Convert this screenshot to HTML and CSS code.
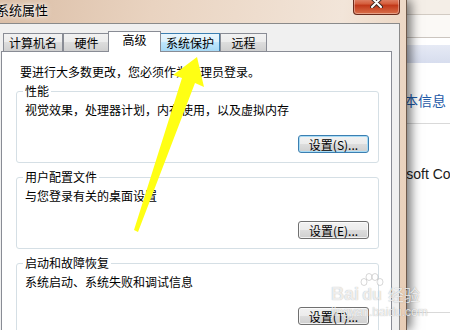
FILE: index.html
```html
<!DOCTYPE html>
<html lang="zh-CN">
<head>
    <meta charset="UTF-8">
    <meta name="viewport" content="width=device-width, initial-scale=1.0">
    <title>系统属性</title>
    <link rel="stylesheet" href="styles.css">
</head>
<body>
    <div class="window">
        <div class="titlebar">
            <span class="title">系统属性</span>
            <button class="close-btn" type="button">
                <svg width="13" height="10" viewBox="0 0 13 10">
                    <path d="M2 0 L11 9 M11 0 L2 9" stroke="#3d2a24" stroke-width="4" stroke-linecap="round"/>
                    <path d="M2 0 L11 9 M11 0 L2 9" stroke="#fff" stroke-width="2" stroke-linecap="round"/>
                </svg>
            </button>
        </div>

        <div class="client">
            <div class="tabs">
                <span class="tab">计算机名</span>
                <span class="tab">硬件</span>
                <span class="tab tab-active">高级</span>
                <span class="tab tab-hover">系统保护</span>
                <span class="tab">远程</span>
            </div>

            <div class="tab-panel">
                <p class="notice">要进行大多数更改，您必须作为管理员登录。</p>

                <fieldset class="group">
                    <legend>性能</legend>
                    <p class="group-desc">视觉效果，处理器计划，内存使用，以及虚拟内存</p>
                    <div class="group-actions">
                        <button class="btn btn-default" type="button">设置(S)...</button>
                    </div>
                </fieldset>

                <fieldset class="group">
                    <legend>用户配置文件</legend>
                    <p class="group-desc">与您登录有关的桌面设置</p>
                    <div class="group-actions">
                        <button class="btn" type="button">设置(E)...</button>
                    </div>
                </fieldset>

                <fieldset class="group">
                    <legend>启动和故障恢复</legend>
                    <p class="group-desc">系统启动、系统失败和调试信息</p>
                    <div class="group-actions">
                        <button class="btn" type="button">设置(T)...</button>
                    </div>
                </fieldset>
            </div>
        </div>
    </div>

    <!-- window behind the dialog -->
    <div class="behind">
        <div class="behind-top"></div>
        <div class="behind-address"></div>
        <div class="behind-band"></div>
        <h2 class="behind-heading">基本信息</h2>
        <hr class="behind-rule">
        <p class="behind-text">Microsoft Corporation</p>
        <hr class="behind-rule behind-rule-low">
    </div>

    <!-- yellow pointer drawn over the screenshot -->
    <svg class="arrow" width="450" height="330" viewBox="0 0 450 330">
        <polygon points="197,57 204,87 195,83 138,232 134,230 182,78 173,75" fill="#ffff14"/>
    </svg>

    <div class="watermark">
        <div class="wm-logo">
            <span class="wm-bai">Bai</span>
            <span class="wm-paw">
                <svg width="24" height="14" viewBox="0 0 24 14">
                    <ellipse cx="4" cy="9" rx="3" ry="3.5"/>
                    <ellipse cx="9" cy="4" rx="3" ry="3.5"/>
                    <ellipse cx="15" cy="4" rx="3" ry="3.5"/>
                    <ellipse cx="20" cy="9" rx="3" ry="3.5"/>
                </svg>
                <span class="wm-du">du</span>
            </span>
            <span class="wm-cn">经验</span>
        </div>
        <div class="wm-url">jingyan.baidu.com</div>
    </div>
</body>
</html>
```

FILE: styles.css
```css
body {
    margin: 0;
    width: 450px;
    height: 330px;
    overflow: hidden;
    display: flex;
    background: #fff;
    font-family: "Noto Sans CJK SC", sans-serif;
    font-size: 12px;
    color: #000;
}

/* dialog frame */
.window {
    box-sizing: border-box;
    flex: none;
    width: 421px;
    margin-left: -14px;
    padding: 0 6px;
    border-right: 1px solid #6e5a4c;
    background: linear-gradient(100deg, #d9bca4 0%, #e9d3c0 35%, #f2e5d9 75%, #e8cdb5 100%);
    position: relative;
    z-index: 1;
    box-shadow: 4px 0 10px rgba(0, 0, 0, 0.55);
}
.titlebar {
    display: flex;
    align-items: flex-start;
    height: 23px;
}
.title {
    margin-left: 4px;
    line-height: 20px;
    font-size: 13px;
    text-shadow: 0 0 6px #fff, 0 0 3px #fff;
}
.close-btn {
    margin: -5px 0 0 auto;
    width: 47px;
    height: 20px;
    padding: 0 0 3px;
    display: flex;
    align-items: center;
    justify-content: center;
    border: 1px solid #6b2b1c;
    border-top: none;
    border-radius: 0 0 4px 4px;
    background: linear-gradient(#e9a793, #d5603f 45%, #c2391a 55%, #d9704b);
    box-shadow: inset 0 0 0 1px rgba(255, 255, 255, 0.35);
}

.client {
    border: 1px solid #8a8a8a;
    background: #f0f0f0;
    padding-top: 7px;
}

/* tabs */
.tabs {
    display: flex;
    align-items: flex-end;
    margin: 0 7px -1px 8px;
    padding-left: 2px;
}
.tab {
    box-sizing: border-box;
    height: 18px;
    min-width: 47px;
    margin-bottom: 1px;
    padding: 0 5px;
    border: 1px solid #898c95;
    border-bottom: none;
    line-height: 17px;
    text-align: center;
    background: linear-gradient(#f2f2f2, #ebebeb 50%, #dddddd 50%, #cfcfcf);
}
.tab-active {
    height: 21px;
    min-width: 53px;
    margin: 0 -1px 0 -2px;
    line-height: 16px;
    background: #fff;
    position: relative;
    z-index: 1;
}
.tab-hover {
    border-color: #3c7fb1;
    background: linear-gradient(#eaf6fd, #d9f0fc 50%, #bee6fd 50%, #a7d9f5);
}

.tab-panel {
    margin: 0 7px 0 8px;
    padding: 12px 12px 20px 14px;
    border: 1px solid #898c95;
    background: #fff;
}
.notice {
    margin: 0 0 0 4px;
    line-height: 16px;
}

.group {
    margin: 3px 0 0;
    padding: 0 9px 9px 8px;
    border: 1px solid #d5dfe5;
    border-radius: 3px;
    min-width: 0;
}
.group + .group {
    margin-top: 6px;
}
.group legend {
    padding: 0 2px;
    margin-left: -2px;
    line-height: 16px;
}
.group-desc {
    margin: 3px 0 0;
    line-height: 16px;
}
.group-actions {
    display: flex;
    justify-content: flex-end;
    margin-top: 17px;
}

.btn {
    box-sizing: border-box;
    width: 71px;
    height: 18px;
    padding: 0;
    font-family: "Noto Sans CJK SC", sans-serif;
    font-size: 12px;
    line-height: 15px;
    color: #000;
    border: 1px solid #707070;
    border-radius: 3px;
    background: linear-gradient(#f2f2f2, #ebebeb 50%, #dddddd 50%, #cfcfcf);
    box-shadow: inset 0 0 0 1px rgba(255, 255, 255, 0.7);
}
.btn-default {
    border-color: #3c7fb1;
    box-shadow: inset 0 0 0 1px #a8dcf6;
}

/* background window */
.behind {
    flex: 1;
    min-width: 0;
    overflow: hidden;
    white-space: nowrap;
}
.behind-top {
    height: 14px;
    border-bottom: 1px solid #d2cbc3;
    background: #f4eee7;
}
.behind-address {
    height: 22px;
    border-bottom: 1px solid #cbc5bf;
    background: #fbf9f6;
}
.behind-band {
    height: 18px;
    margin-top: 7px;
    background: linear-gradient(#e6eaf5, #d7ddee);
}
.behind-heading {
    margin: 27px 0 0 -17px;
    font-size: 14px;
    font-weight: normal;
    line-height: 20px;
    color: #1e5aa8;
}
.behind-rule {
    margin: 13px 0 0;
    border: none;
    border-top: 1px solid #d9d9d9;
}
.behind-text {
    margin: 42px 0 0 -35px;
    font-family: "Liberation Sans", sans-serif;
    font-size: 14px;
    line-height: 16px;
    color: #1a1a1a;
}
.behind-rule-low {
    margin-top: 130px;
}

.arrow {
    position: absolute;
    top: 0;
    left: 0;
    pointer-events: none;
    z-index: 2;
}

/* baidu jingyan watermark */
.watermark {
    position: absolute;
    left: 331px;
    top: 273px;
    z-index: 3;
    color: rgba(255, 255, 255, 0.8);
    text-shadow: 0 0 1px rgba(0, 0, 0, 0.35);
}
.wm-logo {
    display: flex;
    align-items: flex-end;
    gap: 1px;
}
.wm-bai {
    font-family: "Liberation Sans", sans-serif;
    font-weight: bold;
    font-size: 18px;
    line-height: 18px;
}
.wm-paw {
    display: flex;
    flex-direction: column;
    align-items: center;
}
.wm-paw svg {
    fill: rgba(255, 255, 255, 0.8);
    stroke: rgba(0, 0, 0, 0.2);
    stroke-width: 0.8;
}
.wm-du {
    font-family: "Liberation Sans", sans-serif;
    font-weight: bold;
    font-size: 16px;
    line-height: 16px;
}
.wm-cn {
    margin-left: 3px;
    font-size: 16px;
    line-height: 18px;
}
.wm-url {
    margin-top: 3px;
    font-family: "Liberation Sans", sans-serif;
    font-size: 12px;
    line-height: 12px;
}
```
